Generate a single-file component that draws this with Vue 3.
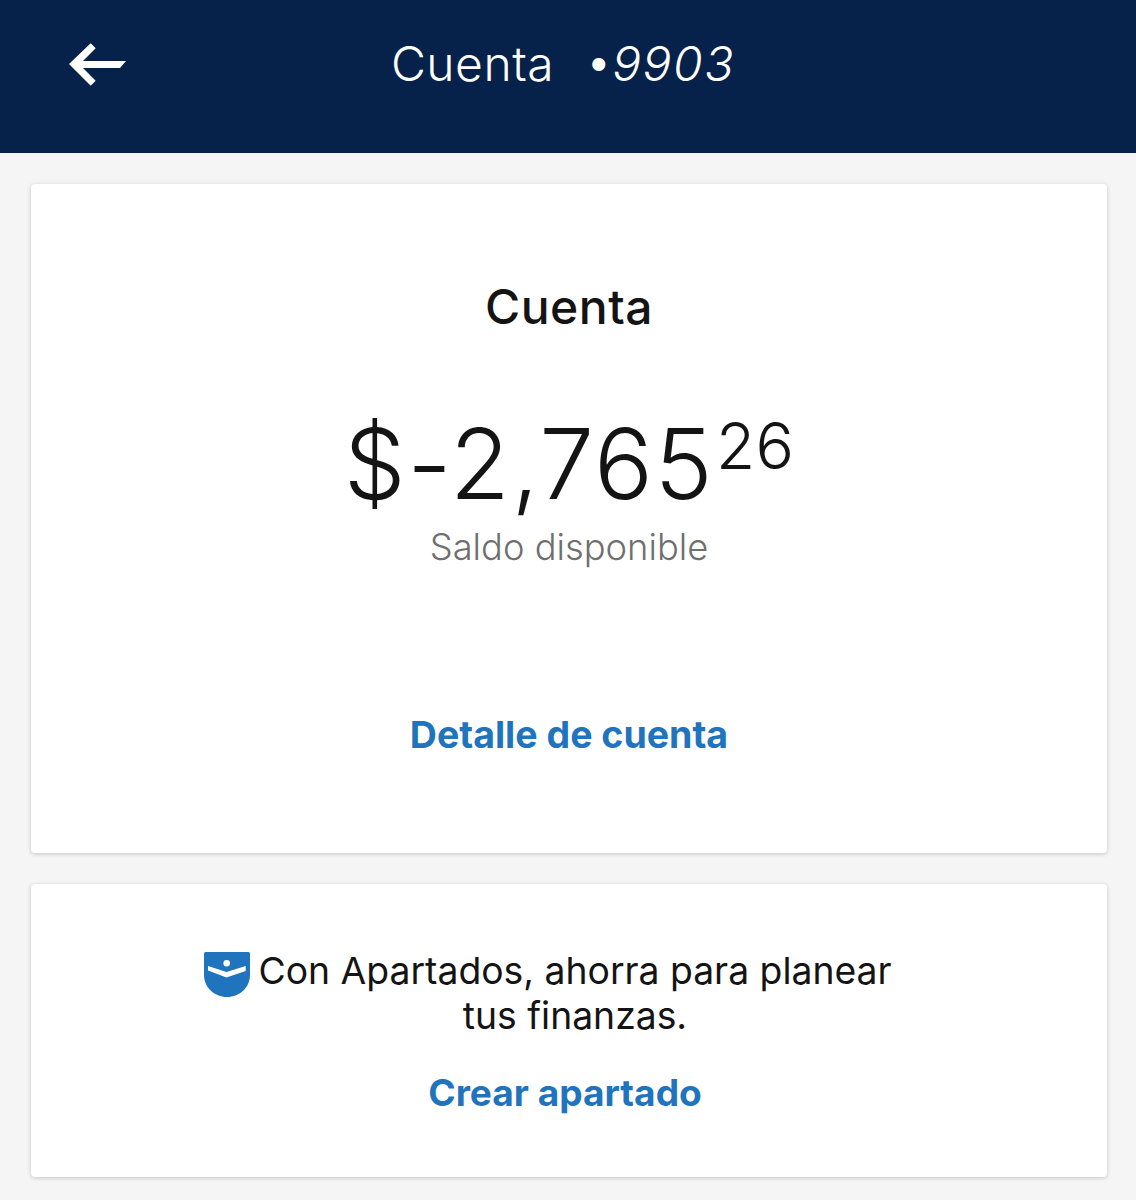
<script setup>
const title = 'Cuenta'
</script>

<template>
  <div class="page">
    <header class="bar">
      <button class="back" aria-label="Volver">
        <svg width="60" height="46" viewBox="0 0 60 46">
          <path d="M1 22 L22.7 1.3 L27.7 6.3 L15 19 H58 L52 26 H15 L27.7 38.7 L22.7 43.7 Z" fill="#fff"/>
        </svg>
      </button>
      <div class="bar-title"><span class="name">{{ title }}</span><span class="dot">•</span><em>9903</em></div>
    </header>
    <main class="content">
      <section class="card main-card">
        <h2>{{ title }}</h2>
        <div class="amount"><span>$-2,765</span><sup>26</sup></div>
        <div class="caption">Saldo disponible</div>
        <a class="link detail">Detalle de cuenta</a>
      </section>
      <section class="card promo">
        <div class="promo-text">
          <svg class="pocket" width="46" height="45" viewBox="0 0 46 45">
            <path d="M0 1.5 Q0 0 1.5 0 H44.5 Q46 0 46 1.5 V23 C46 35 36 45 23 45 C10 45 0 35 0 23 Z" fill="#1f74bd"/>
            <path d="M4 14 L22.5 20 L41.7 14 V19 L22.5 25.5 L4 18.5 Z" fill="#fff"/>
            <circle cx="22.7" cy="11.3" r="3.3" fill="#fff"/>
          </svg>
          <span>Con Apartados, ahorra para planear<br>tus finanzas.</span>
        </div>
        <a class="link create">Crear apartado</a>
      </section>
    </main>
  </div>
</template>

<style>
html, body { margin: 0; background: #f5f5f5; }
</style>

<style scoped>
.page {
  width: 1136px;
  height: 1200px;
  overflow: hidden;
  background: #f5f5f5;
  font-family: Inter, "Open Sans", sans-serif;
  color: #141414;
}
.bar {
  height: 153px;
  background: #06214a;
  color: #fff;
  display: flex;
  justify-content: center;
  position: relative;
}
.back {
  position: absolute;
  left: 68px;
  top: 42px;
  padding: 0;
  border: 0;
  background: none;
  line-height: 0;
}
.bar-title {
  margin: 32px 10px 0 0;
  font-size: 48px;
  line-height: 64px;
  font-weight: 300;
}
.name { letter-spacing: 0.5px; }
.bar-title em { font-style: italic; letter-spacing: 1.6px; }
.dot { margin-left: 31px; vertical-align: 3px; line-height: 0; }
.content {
  padding: 31px 29px 0 31px;
  display: flex;
  flex-direction: column;
  gap: 31px;
}
.card {
  background: #fff;
  border-radius: 4px;
  box-shadow: 0 1px 4px rgba(0, 0, 0, 0.2);
  display: flex;
  flex-direction: column;
  align-items: center;
}
.main-card { height: 669px; }
h2 {
  margin: 93px 0 0;
  font-size: 48px;
  line-height: 60px;
  font-weight: 500;
  letter-spacing: 0.5px;
}
.amount {
  margin-top: 72px;
  font-size: 98px;
  line-height: 110px;
  font-weight: 300;
  letter-spacing: 1.5px;
  display: flex;
}
.amount sup {
  font-size: 64px;
  line-height: 60px;
  margin-top: 7px;
  margin-left: 2px;
  letter-spacing: 0.2px;
}
.caption {
  margin-top: 4px;
  font-size: 36.3px;
  line-height: 48px;
  font-weight: 300;
  color: #6f6f6f;
}
.link {
  color: #1f74bd;
  line-height: 50px;
  font-weight: 700;
}
.detail { margin-top: 139px; font-size: 37.5px; }
.promo { height: 293px; }
.promo-text {
  margin-top: 64px;
  padding-right: 42px;
  font-size: 37.3px;
  line-height: 45px;
  text-align: center;
  display: flex;
  align-items: flex-start;
}
.pocket { margin: 4px 8px 0 0; flex: none; }
.create { margin-top: 30px; margin-right: 8px; font-size: 37.1px; }
</style>
